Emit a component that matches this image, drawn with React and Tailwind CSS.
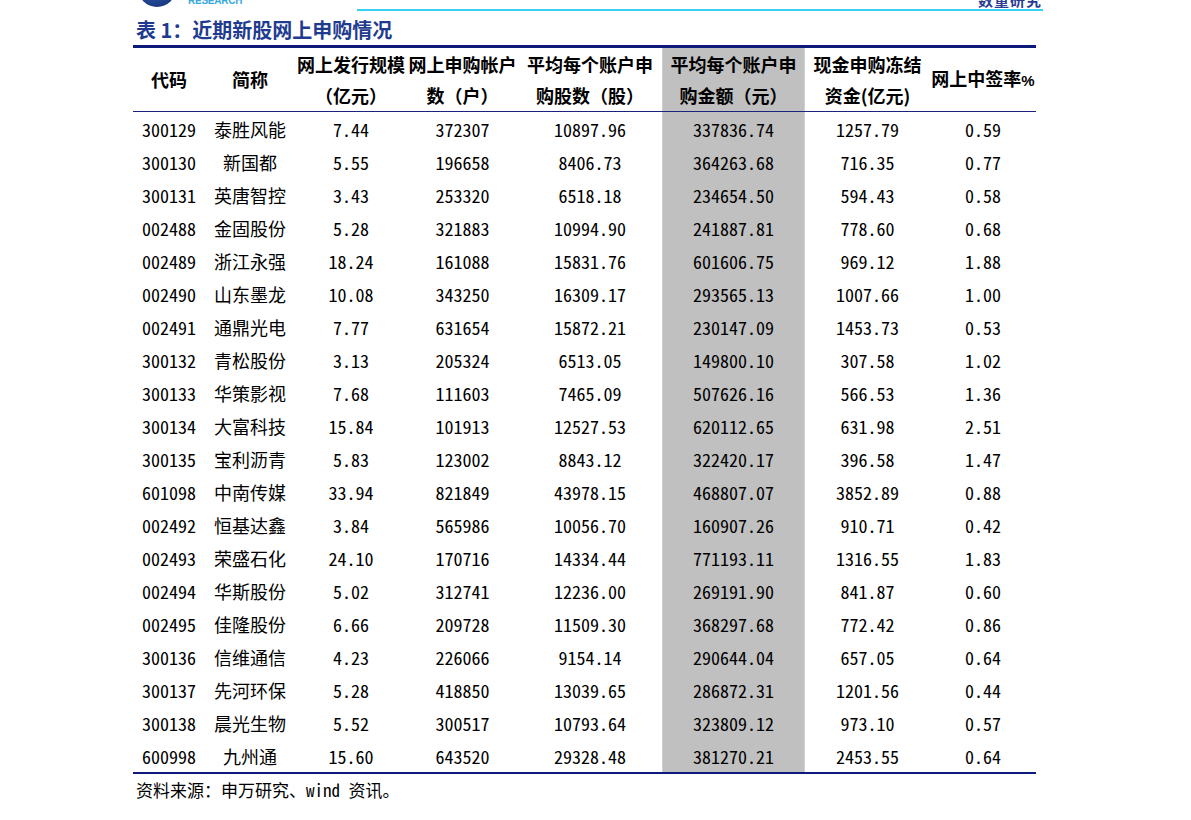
import React from "react";

const rows = [
  ["300129", "泰胜风能", "7.44", "372307", "10897.96", "337836.74", "1257.79", "0.59"],
  ["300130", "新国都", "5.55", "196658", "8406.73", "364263.68", "716.35", "0.77"],
  ["300131", "英唐智控", "3.43", "253320", "6518.18", "234654.50", "594.43", "0.58"],
  ["002488", "金固股份", "5.28", "321883", "10994.90", "241887.81", "778.60", "0.68"],
  ["002489", "浙江永强", "18.24", "161088", "15831.76", "601606.75", "969.12", "1.88"],
  ["002490", "山东墨龙", "10.08", "343250", "16309.17", "293565.13", "1007.66", "1.00"],
  ["002491", "通鼎光电", "7.77", "631654", "15872.21", "230147.09", "1453.73", "0.53"],
  ["300132", "青松股份", "3.13", "205324", "6513.05", "149800.10", "307.58", "1.02"],
  ["300133", "华策影视", "7.68", "111603", "7465.09", "507626.16", "566.53", "1.36"],
  ["300134", "大富科技", "15.84", "101913", "12527.53", "620112.65", "631.98", "2.51"],
  ["300135", "宝利沥青", "5.83", "123002", "8843.12", "322420.17", "396.58", "1.47"],
  ["601098", "中南传媒", "33.94", "821849", "43978.15", "468807.07", "3852.89", "0.88"],
  ["002492", "恒基达鑫", "3.84", "565986", "10056.70", "160907.26", "910.71", "0.42"],
  ["002493", "荣盛石化", "24.10", "170716", "14334.44", "771193.11", "1316.55", "1.83"],
  ["002494", "华斯股份", "5.02", "312741", "12236.00", "269191.90", "841.87", "0.60"],
  ["002495", "佳隆股份", "6.66", "209728", "11509.30", "368297.68", "772.42", "0.86"],
  ["300136", "信维通信", "4.23", "226066", "9154.14", "290644.04", "657.05", "0.64"],
  ["300137", "先河环保", "5.28", "418850", "13039.65", "286872.31", "1201.56", "0.44"],
  ["300138", "晨光生物", "5.52", "300517", "10793.64", "323809.12", "973.10", "0.57"],
  ["600998", "九州通", "15.60", "643520", "29328.48", "381270.21", "2453.55", "0.64"],
];

const widths = ["w-[72px]", "w-[90px]", "w-[112px]", "w-[111px]", "w-[144px]", "w-[143px]", "w-[125px]", "w-[106px]"];

const cjk = { fontFamily: '"Noto Sans CJK SC", "Noto Sans", sans-serif' };
const mono = { fontFamily: '"Noto Sans Mono CJK SC", "DejaVu Sans Mono", monospace' };

const heads = [
  ["代码"],
  ["简称"],
  ["网上发行规模", "（亿元）"],
  ["网上申购帐户", "数（户）"],
  ["平均每个账户申", "购股数（股）"],
  ["平均每个账户申", "购金额（元）"],
  ["现金申购冻结", "资金(亿元)"],
];

function Cell({ i, children, gray, font }) {
  return (
    <div
      className={`${widths[i]} shrink-0 h-full flex items-center justify-center ${
        gray ? "bg-[#c0c0c0] border-x border-[#d0d0d0]" : ""
      }`}
      style={font}
    >
      {children}
    </div>
  );
}

export default function App() {
  return (
    <div className="w-[1191px] h-[820px] bg-white overflow-hidden text-black">
      {/* top strip */}
      <div className="h-[12px] relative overflow-hidden">
        <svg className="absolute left-[137px] top-[-30px]" width="40" height="38" viewBox="0 0 40 38">
          <defs>
            <radialGradient id="g" cx="0.4" cy="0.3" r="0.8">
              <stop offset="0" stopColor="#3a6fc4" />
              <stop offset="1" stopColor="#16327a" />
            </radialGradient>
          </defs>
          <circle cx="20" cy="18" r="19" fill="url(#g)" />
        </svg>
        <div
          className="absolute left-[188px] top-[-4px] text-[10px] font-bold text-[#39a9dd] leading-none tracking-tight"
          style={{ fontFamily: '"Liberation Sans", sans-serif' }}
        >
          RESEARCH
        </div>
        <div className="absolute left-[357px] top-[9px] w-[686px] h-[2px] bg-[#35d0f2]" />
        <div
          className="absolute left-[978px] top-[-8px] text-[15px] font-bold text-[#2b3c92] leading-none tracking-[1px]"
          style={cjk}
        >
          数量研究
        </div>
      </div>

      <div className="pl-[133px]">
        <div className="h-[33px] flex items-center pl-[3px] pt-[2px] text-[20px] font-bold text-[#1f3b8f] leading-none" style={cjk}>
          表 1：近期新股网上申购情况
        </div>

        <div className="w-[903px]">
          <div className="h-[3px] bg-[#0e1a7a]" />
          <div className="flex h-[64px] border-b border-[#1b237f] text-[18px] font-bold leading-[31px]">
            {heads.map((h, i) => (
              <Cell key={i} i={i} gray={i === 5} font={cjk}>
                <div className="text-center whitespace-nowrap">
                  {h.map((l, j) => (
                    <div key={j}>{l}</div>
                  ))}
                </div>
              </Cell>
            ))}
            <Cell i={7} font={cjk}>
              <div className="whitespace-nowrap">
                网上中签率<span className="text-[15px]" style={{ fontFamily: '"Liberation Sans Narrow", "Liberation Sans", sans-serif' }}>%</span>
              </div>
            </Cell>
          </div>
          {rows.map((r, ri) => (
            <div key={ri} className="flex h-[33px] text-[18px] leading-none">
              {r.map((v, i) => (
                <Cell key={i} i={i} gray={i === 5} font={i === 1 ? cjk : mono}>
                  {v}
                </Cell>
              ))}
            </div>
          ))}
          <div className="h-[2px] bg-[#0e1a7a]" />
        </div>

        <div className="pt-[7px] pl-[3px] text-[17px] leading-none" style={cjk}>
          资料来源：申万研究、<span style={mono}>wind </span>资讯。
        </div>
      </div>
    </div>
  );
}
